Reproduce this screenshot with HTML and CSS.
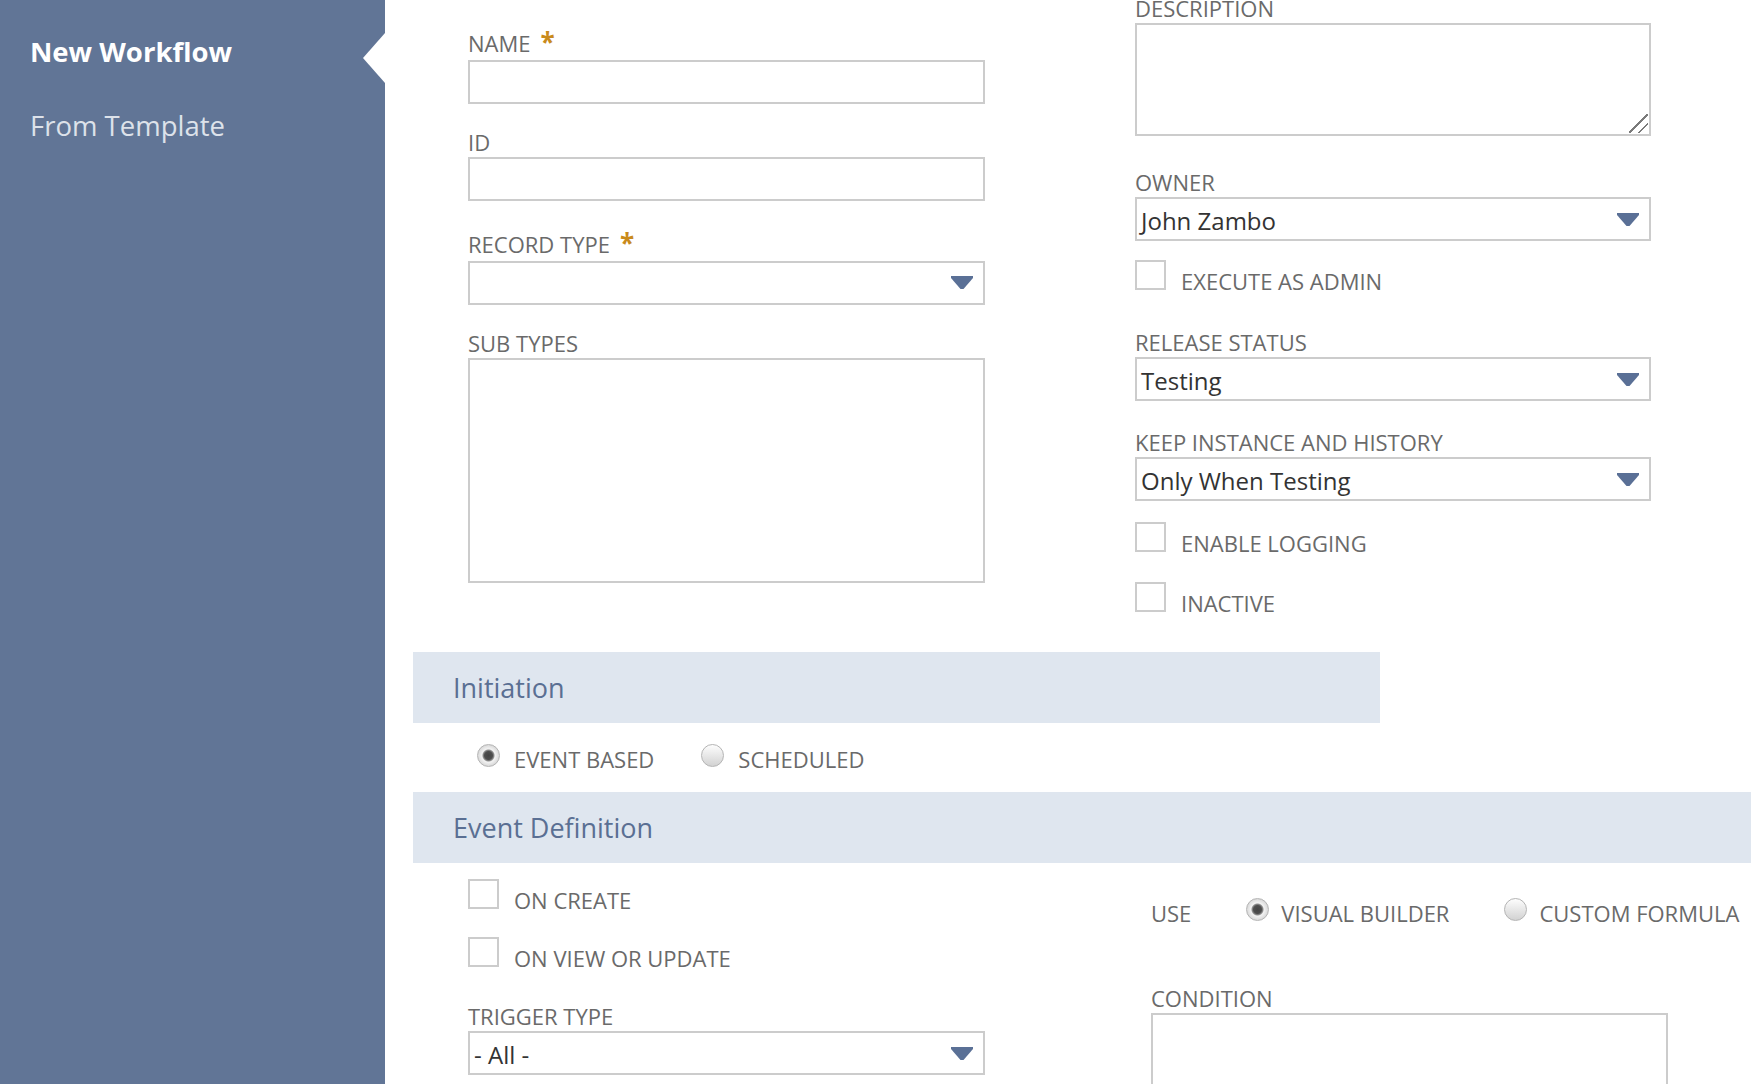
FILE: index.html
```html
<!DOCTYPE html>
<html lang="en">
<head>
    <meta charset="UTF-8">
    <meta name="viewport" content="width=device-width, initial-scale=1.0">
    <title>New Workflow</title>
    <link rel="stylesheet" href="styles.css">
</head>
<body>

    <!-- Sidebar -->
    <div class="sidebar">
        <ul class="side-nav">
            <li class="active"><a href="#">New Workflow</a></li>
            <li><a href="#">From Template</a></li>
        </ul>
    </div>

    <!-- Main form -->
    <div class="main">

        <div class="top-form">
            <div class="col col-left">
                <div class="field">
                    <label class="field-label required">NAME<span class="req">*</span></label>
                    <div class="text-input"></div>
                </div>
                <div class="field">
                    <label class="field-label">ID</label>
                    <div class="text-input"></div>
                </div>
                <div class="field">
                    <label class="field-label required">RECORD TYPE<span class="req">*</span></label>
                    <div class="select">
                        <span class="value"></span>
                        <svg viewBox="0 0 22 13"><path d="M0 0H22V2L12.5 13H9.5L0 2Z" fill="#5a7096"/></svg>
                    </div>
                </div>
                <div class="field">
                    <label class="field-label">SUB TYPES</label>
                    <div class="listbox"></div>
                </div>
            </div>

            <div class="col col-right">
                <div class="field field-desc">
                    <label class="field-label">DESCRIPTION</label>
                    <textarea class="textarea"></textarea>
                </div>
                <div class="field field-owner">
                    <label class="field-label">OWNER</label>
                    <div class="select">
                        <span class="value">John Zambo</span>
                        <svg viewBox="0 0 22 13"><path d="M0 0H22V2L12.5 13H9.5L0 2Z" fill="#5a7096"/></svg>
                    </div>
                </div>
                <div class="check-row check-admin"><span class="checkbox"></span>EXECUTE AS ADMIN</div>
                <div class="field field-release">
                    <label class="field-label">RELEASE STATUS</label>
                    <div class="select">
                        <span class="value">Testing</span>
                        <svg viewBox="0 0 22 13"><path d="M0 0H22V2L12.5 13H9.5L0 2Z" fill="#5a7096"/></svg>
                    </div>
                </div>
                <div class="field field-keep">
                    <label class="field-label">KEEP INSTANCE AND HISTORY</label>
                    <div class="select">
                        <span class="value">Only When Testing</span>
                        <svg viewBox="0 0 22 13"><path d="M0 0H22V2L12.5 13H9.5L0 2Z" fill="#5a7096"/></svg>
                    </div>
                </div>
                <div class="check-row"><span class="checkbox"></span>ENABLE LOGGING</div>
                <div class="check-row"><span class="checkbox"></span>INACTIVE</div>
            </div>
        </div>

        <!-- Initiation -->
        <div class="section-head narrow">Initiation</div>
        <div class="radio-row initiation">
            <div class="radio-opt"><span class="radio checked"></span>EVENT BASED</div>
            <div class="radio-opt"><span class="radio"></span>SCHEDULED</div>
        </div>

        <!-- Event Definition -->
        <div class="section-head">Event Definition</div>
        <div class="event-body">
            <div class="col event-left">
                <div class="check-row check-create"><span class="checkbox"></span>ON CREATE</div>
                <div class="check-row check-view"><span class="checkbox"></span>ON VIEW OR UPDATE</div>
                <div class="field">
                    <label class="field-label">TRIGGER TYPE</label>
                    <div class="select">
                        <span class="value">- All -</span>
                        <svg viewBox="0 0 22 13"><path d="M0 0H22V2L12.5 13H9.5L0 2Z" fill="#5a7096"/></svg>
                    </div>
                </div>
            </div>
            <div class="col event-right">
                <div class="radio-row use-row">
                    <div class="use-label">USE</div>
                    <div class="radio-opt"><span class="radio checked"></span>VISUAL BUILDER</div>
                    <div class="radio-opt"><span class="radio"></span>CUSTOM FORMULA</div>
                </div>
                <div class="field">
                    <label class="field-label">CONDITION</label>
                    <div class="condition-box"></div>
                </div>
            </div>
        </div>
    </div>

</body>
</html>
```

FILE: styles.css
```css
/* General */
* {
    box-sizing: border-box;
}

html, body {
    height: 100%;
    overflow: hidden;
}

body {
    margin: 0;
    font-family: 'Open Sans', 'Noto Sans', sans-serif;
    background-color: #fff;
    display: flex;
}

/* Sidebar */
.sidebar {
    width: 385px;
    flex-shrink: 0;
    height: 100vh;
    background-color: #617596;
    padding: 33px 0 0 30px;
}

.side-nav {
    list-style: none;
    margin: 0;
    padding: 0;
}

.side-nav li {
    position: relative;
    margin-bottom: 36px;
}

.side-nav a {
    display: block;
    font-size: 27.5px;
    line-height: 38px;
    color: #dde2ea;
    text-decoration: none;
}

.side-nav li.active a {
    color: #fff;
    font-weight: 700;
}

/* white notch pointing at the active item */
.side-nav li.active::after {
    content: '';
    position: absolute;
    right: 0;
    top: 0;
    border-top: 25px solid transparent;
    border-bottom: 25px solid transparent;
    border-right: 22px solid #fff;
}

/* Main */
.main {
    flex: 1;
    min-width: 0;
    padding-left: 28px;
}

.top-form {
    display: grid;
    grid-template-columns: 517px 516px;
    column-gap: 150px;
    align-items: start;
    padding: 0 0 36px 55px;
}

.col-left {
    padding-top: 24.5px;
}

.col-right {
    margin-top: -5px;
}

.field {
    margin-bottom: 25px;
}

.col > :last-child {
    margin-bottom: 0;
}

.field-label {
    display: block;
    font-size: 22px;
    line-height: 26px;
    color: #6a6a6a;
    margin-bottom: 2px;
}

.field-label.required {
    padding-top: 5px;
    margin-bottom: 4px;
}

.req {
    color: #c98a1b;
    font-weight: 700;
    font-size: 26px;
    line-height: 0;
    margin-left: 10px;
}

.text-input,
.listbox,
.condition-box {
    height: 44px;
    border: 2px solid #ccc;
    background-color: #fff;
}

.listbox {
    height: 225px;
}

.condition-box {
    width: 517px;
    height: 100px;
}

/* description box, with a drawn resize grip */
.textarea {
    display: block;
    width: 100%;
    height: 113px;
    margin: 0;
    border: 2px solid #ccc;
    border-radius: 0;
    outline: none;
    resize: none;
    font-family: inherit;
    background-color: #fff;
    background-image: linear-gradient(135deg,
        transparent 47%, #7a7a7a 47%, #7a7a7a 53%, transparent 53%,
        transparent 72%, #7a7a7a 72%, #7a7a7a 78%, transparent 78%);
    background-size: 19px 19px;
    background-position: right 1px bottom 1px;
    background-repeat: no-repeat;
}

.select {
    display: flex;
    align-items: center;
    justify-content: space-between;
    height: 44px;
    border: 2px solid #ccc;
    padding: 0 10px 0 4px;
    font-size: 24px;
    color: #333;
}

.select .value {
    padding-top: 3px;
}

.select svg {
    width: 22px;
    height: 13px;
    flex-shrink: 0;
}

/* Checkboxes */
.check-row {
    font-size: 22px;
    line-height: 26px;
    color: #6a6a6a;
    margin-bottom: 26px;
    white-space: nowrap;
}

.checkbox {
    display: inline-block;
    vertical-align: baseline;
    width: 31px;
    height: 30px;
    margin-right: 15px;
    border: 2px solid #ccc;
    background-color: #fff;
}

/* spacing in the right column */
.field-desc { margin-bottom: 33px; }
.field-owner { margin-bottom: 19px; }
.check-admin { margin-bottom: 35px; }
.field-release { margin-bottom: 28px; }
.field-keep { margin-bottom: 21px; }

/* Section bands */
.section-head {
    height: 71px;
    display: flex;
    align-items: center;
    padding-left: 40px;
    background-color: #dfe6ef;
    color: #5a6f93;
    font-size: 27px;
}

.section-head.narrow {
    width: 967px;
}

/* Radios */
.radio-row {
    display: flex;
    align-items: baseline;
    font-size: 22px;
    line-height: 26px;
    color: #6a6a6a;
    white-space: nowrap;
}

.initiation {
    padding-left: 64px;
    margin: 21px 0 19.5px;
    gap: 47px;
}

.radio {
    display: inline-block;
    vertical-align: baseline;
    width: 23px;
    height: 23px;
    margin: 0 14px 1px 0;
    border-radius: 50%;
    border: 1px solid #b4b4b4;
    background: linear-gradient(#fdfdfd, #d2d2d2);
}

.radio.checked {
    background: radial-gradient(circle, #444 0, #4e4e4e 4px, #929292 5.5px, #f3f3f3 6.5px, #d6d6d6 11px);
}

/* Event definition */
.event-body {
    display: grid;
    grid-template-columns: 517px 1fr;
    column-gap: 166px;
    padding-left: 55px;
}

.event-left {
    padding-top: 16px;
}

.check-create { margin-bottom: 24.5px; }
.check-view { margin-bottom: 32px; }

.event-right {
    padding-top: 35px;
}

.use-row {
    margin-bottom: 59px;
    gap: 55px;
}

.use-row .radio {
    margin-right: 12px;
}
```
